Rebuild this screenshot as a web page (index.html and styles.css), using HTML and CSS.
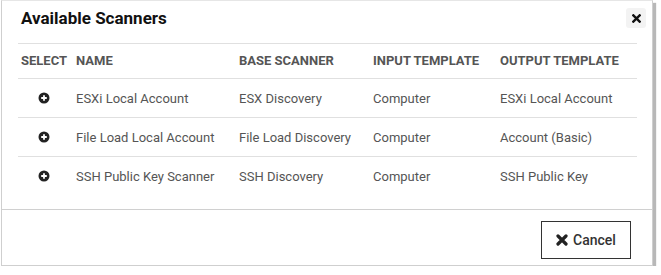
FILE: index.html
```html
<!DOCTYPE html>
<html lang="en">
  <head>
    <meta charset="UTF-8" />
    <title>Available Scanners</title>
    <link rel="stylesheet" href="styles.css">
  </head>
  <body>
    <div class="dialog">
      <div class="dialog-header">
        <h2>Available Scanners</h2>
        <button class="close-btn" aria-label="Close">
          <svg width="9" height="9" viewBox="0 0 10 10"><path d="M1.5 1.5 L8.5 8.5 M8.5 1.5 L1.5 8.5" stroke="#111" stroke-width="2.6" stroke-linecap="square"/></svg>
        </button>
      </div>

      <div class="dialog-body">
        <table class="scanners">
          <colgroup>
            <col class="c-select" />
            <col class="c-name" />
            <col class="c-base" />
            <col class="c-input" />
            <col />
          </colgroup>
          <thead>
            <tr>
              <th>Select</th>
              <th>Name</th>
              <th>Base Scanner</th>
              <th>Input Template</th>
              <th>Output Template</th>
            </tr>
          </thead>
          <tbody>
            <tr>
              <td class="sel"><svg class="plus" width="12" height="12" viewBox="0 0 12 12"><circle cx="6" cy="6" r="5.5" fill="#222"/><path d="M6 3.2v5.6M3.2 6h5.6" stroke="#fff" stroke-width="1.8"/></svg></td>
              <td>ESXi Local Account</td>
              <td>ESX Discovery</td>
              <td>Computer</td>
              <td>ESXi Local Account</td>
            </tr>
            <tr>
              <td class="sel"><svg class="plus" width="12" height="12" viewBox="0 0 12 12"><circle cx="6" cy="6" r="5.5" fill="#222"/><path d="M6 3.2v5.6M3.2 6h5.6" stroke="#fff" stroke-width="1.8"/></svg></td>
              <td>File Load Local Account</td>
              <td>File Load Discovery</td>
              <td>Computer</td>
              <td>Account (Basic)</td>
            </tr>
            <tr>
              <td class="sel"><svg class="plus" width="12" height="12" viewBox="0 0 12 12"><circle cx="6" cy="6" r="5.5" fill="#222"/><path d="M6 3.2v5.6M3.2 6h5.6" stroke="#fff" stroke-width="1.8"/></svg></td>
              <td>SSH Public Key Scanner</td>
              <td>SSH Discovery</td>
              <td>Computer</td>
              <td>SSH Public Key</td>
            </tr>
          </tbody>
        </table>
      </div>

      <div class="dialog-footer">
        <button class="cancel-btn">
          <svg width="12" height="12" viewBox="0 0 12 12"><path d="M2 2 L10 10 M10 2 L2 10" stroke="#222" stroke-width="3.2" stroke-linecap="round"/></svg>
          Cancel
        </button>
      </div>
    </div>
  </body>
</html>
```

FILE: styles.css
```css
body {
  margin: 0;
  padding: 0;
  background-color: #fff;
  font-family: Roboto, "Liberation Sans", Arial, sans-serif;
}
.dialog {
  margin-left: 1px;
  width: 650px;
  height: 264px;
  border: 1px solid #cfcfcf;
  border-top-color: #e6e6e6;
  background: #fff;
  box-shadow: 3px 3px 1px rgba(0, 0, 0, 0.28);
  display: flex;
  flex-direction: column;
}
.dialog-header {
  display: flex;
  align-items: flex-start;
  justify-content: space-between;
  padding: 0 6px 0 19px;
  height: 42px;
}
.dialog-header h2 {
  margin: 0;
  padding-top: 7px;
  font-size: 17px;
  font-weight: 700;
  color: #111;
}
.close-btn {
  margin-top: 7px;
  width: 20px;
  height: 20px;
  border: none;
  border-radius: 3px;
  background: #f3f3f3;
  padding: 0;
  display: flex;
  align-items: center;
  justify-content: center;
}
.dialog-body {
  padding: 0 15px 0 16px;
  flex: 1;
}
.scanners {
  width: 100%;
  border-collapse: collapse;
  table-layout: fixed;
  font-size: 13px;
  color: #555;
}
.c-select { width: 55px; }
.c-name { width: 163px; }
.c-base { width: 134px; }
.c-input { width: 127px; }
.scanners thead tr {
  border-top: 1px solid #e0e0e0;
}
.scanners th {
  text-align: left;
  text-transform: uppercase;
  font-size: 13px;
  font-weight: 700;
  color: #555;
  height: 32px;
  padding: 0 3px 2px 3px;
  white-space: nowrap;
}
.scanners td {
  height: 38px;
  padding: 0 3px;
  white-space: nowrap;
}
.scanners tbody tr {
  border-top: 1px solid #e0e0e0;
}
.scanners td.sel {
  padding: 0 0 0 20px;
}
.plus {
  display: block;
}
.dialog-footer {
  border-top: 1px solid #d0d0d0;
  height: 56px;
  display: flex;
  align-items: flex-end;
  justify-content: flex-end;
  padding: 0 21px 6px 0;
  box-sizing: border-box;
}
.cancel-btn {
  width: 90px;
  height: 38px;
  border: 1px solid #333;
  background: #fff;
  border-radius: 0;
  font-family: Roboto, "Liberation Sans", Arial, sans-serif;
  font-size: 14px;
  font-weight: 500;
  color: #333;
  display: flex;
  align-items: center;
  justify-content: center;
  gap: 5px;
  padding: 0;
}
```
